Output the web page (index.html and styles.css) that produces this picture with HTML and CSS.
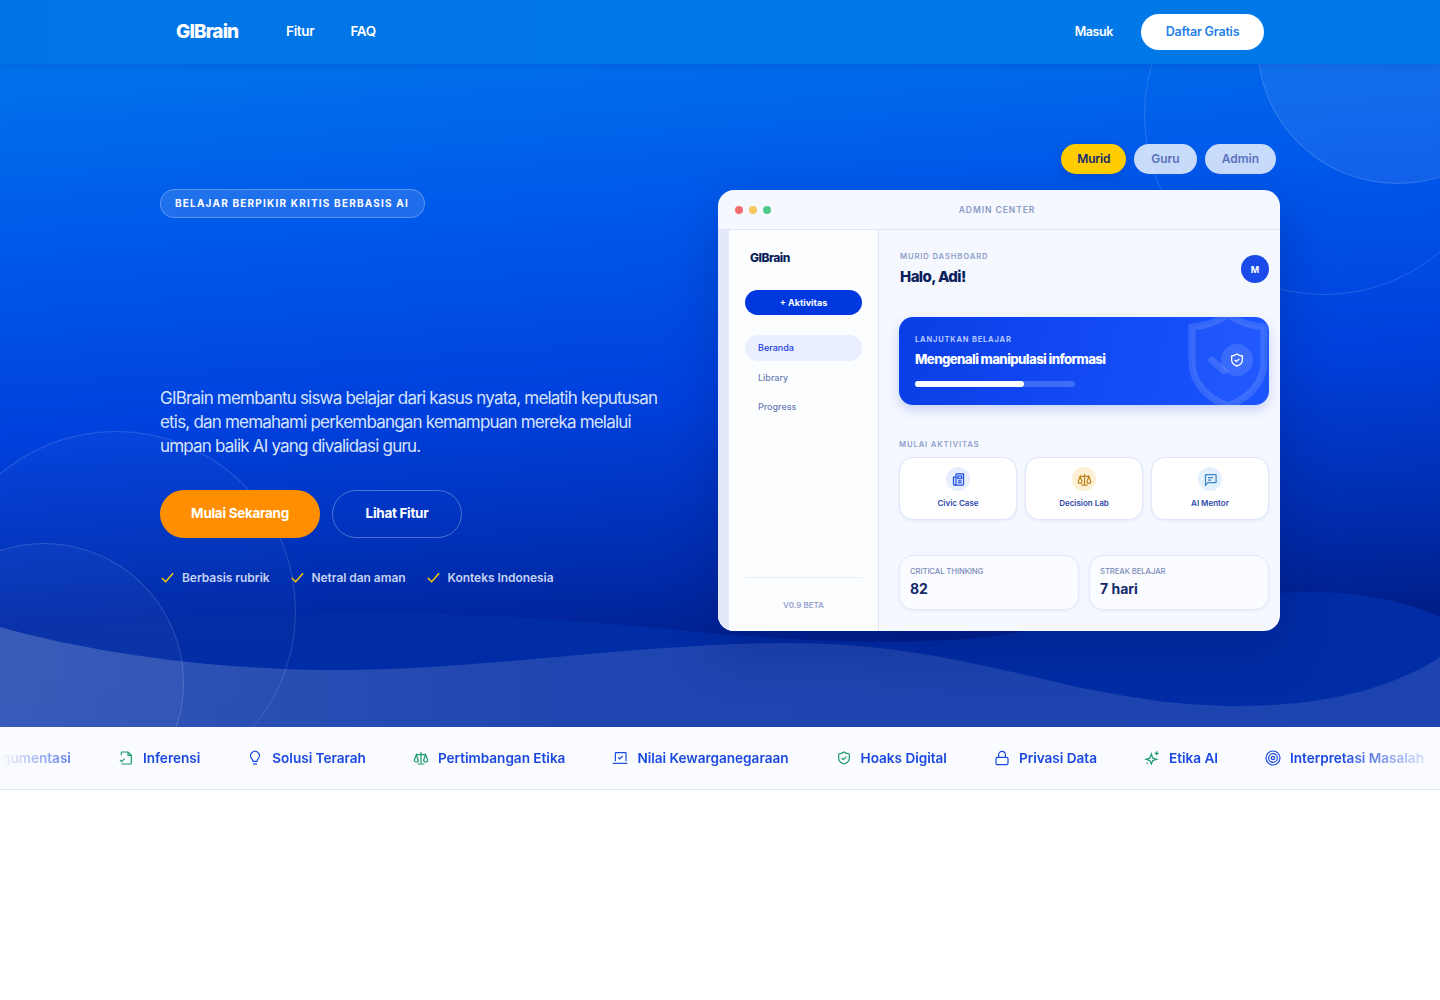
FILE: index.html
```html
<!DOCTYPE html>
<html lang="id">
<head>
    <meta charset="UTF-8">
    <meta name="viewport" content="width=device-width, initial-scale=1.0">
    <title>GIBrain</title>
    <link rel="stylesheet" href="styles.css">
</head>
<body>
    <header class="navbar">
        <div class="navbar-inner">
            <div class="nav-left">
                <a class="logo" href="#">GIBrain</a>
                <a class="nav-link" href="#">Fitur</a>
                <a class="nav-link" href="#">FAQ</a>
            </div>
            <div class="nav-right">
                <a class="nav-link" href="#">Masuk</a>
                <a class="nav-cta" href="#">Daftar Gratis</a>
            </div>
        </div>
    </header>

    <section class="hero">
        <div class="circle circle-top-a"></div>
        <div class="circle circle-top-b"></div>
        <svg class="waves" viewBox="0 580 1440 147" preserveAspectRatio="none" aria-hidden="true">
            <defs>
                <linearGradient id="frontWave" x1="0" x2="1" y1="0" y2="0">
                    <stop offset="0" stop-color="#fff" stop-opacity="0.2"></stop>
                    <stop offset="0.4" stop-color="#fff" stop-opacity="0.12"></stop>
                    <stop offset="1" stop-color="#fff" stop-opacity="0.11"></stop>
                </linearGradient>
            </defs>
            <path fill="#002ca5" d="M0,637 C100,622 220,612 340,612 C480,612 600,622 700,632 C800,642 950,648 1030,630 C1120,610 1220,592 1313,592 C1370,592 1410,604 1440,617 L1440,727 L0,727 Z"></path>
            <path fill="url(#frontWave)" d="M0,627 C100,655 220,670 340,670 C480,670 620,645 780,643 C900,642 980,665 1077,687 C1140,700 1190,706 1238,706 C1320,706 1390,690 1440,657 L1440,727 L0,727 Z"></path>
        </svg>
        <div class="circle circle-left-a"></div>
        <div class="circle circle-left-b"></div>

        <div class="hero-inner">
            <div class="hero-copy">
                <span class="badge">BELAJAR BERPIKIR KRITIS BERBASIS AI</span>
                <div class="hero-title"></div>
                <p class="hero-text">GIBrain membantu siswa belajar dari kasus nyata, melatih keputusan etis, dan memahami perkembangan kemampuan mereka melalui umpan balik AI yang divalidasi guru.</p>
                <div class="hero-actions">
                    <a class="btn-primary" href="#">Mulai Sekarang</a>
                    <a class="btn-outline" href="#">Lihat Fitur</a>
                </div>
                <ul class="checks">
                    <li><svg viewBox="0 0 16 16"><path d="M2 8.500l4 4 8-9"></path></svg>Berbasis rubrik</li>
                    <li><svg viewBox="0 0 16 16"><path d="M2 8.500l4 4 8-9"></path></svg>Netral dan aman</li>
                    <li><svg viewBox="0 0 16 16"><path d="M2 8.500l4 4 8-9"></path></svg>Konteks Indonesia</li>
                </ul>
            </div>

            <div class="hero-preview">
                <div class="role-tabs">
                    <span class="role-tab active">Murid</span>
                    <span class="role-tab">Guru</span>
                    <span class="role-tab">Admin</span>
                </div>
                <div class="app-window">
                    <div class="window-bar">
                        <span class="dot dot-red"></span>
                        <span class="dot dot-yellow"></span>
                        <span class="dot dot-green"></span>
                        <span class="window-title">ADMIN CENTER</span>
                    </div>
                    <div class="window-body">
                        <aside class="sidebar">
                            <div class="sidebar-logo">GIBrain</div>
                            <div class="sidebar-btn">+ Aktivitas</div>
                            <ul class="sidebar-menu">
                                <li class="active">Beranda</li>
                                <li>Library</li>
                                <li>Progress</li>
                            </ul>
                            <div class="sidebar-version">V0.9 BETA</div>
                        </aside>
                        <div class="dash">
                            <div class="dash-head">
                                <div>
                                    <div class="eyebrow">MURID DASHBOARD</div>
                                    <h2>Halo, Adi!</h2>
                                </div>
                                <span class="avatar">M</span>
                            </div>

                            <div class="continue-card">
                                <svg class="continue-shield" viewBox="0 0 84 100">
                                    <path d="M42 4c10 8 22 12 36 13v34c0 22-15 37-36 45C21 88 6 73 6 51V17c14-1 26-5 36-13z"></path>
                                    <path d="M26 50l12 11"></path>
                                </svg>
                                <div class="continue-label">LANJUTKAN BELAJAR</div>
                                <div class="continue-title">Mengenali manipulasi informasi</div>
                                <div class="progress"><div class="progress-fill" style="width: 68%"></div></div>
                                <span class="continue-icon">
                                    <svg viewBox="0 0 24 24"><path d="M12 3c2.500 1.800 5 2.700 8 3v6c0 4.500-3.200 7.500-8 9-4.800-1.500-8-4.500-8-9V6c3-.3 5.500-1.200 8-3z"></path><path d="M8.500 12l2.500 2.500 4.500-4.500"></path></svg>
                                </span>
                            </div>

                            <div class="eyebrow section-label">MULAI AKTIVITAS</div>
                            <div class="activity-grid">
                                <div class="activity">
                                    <span class="activity-icon icon-blue">
                                        <svg viewBox="0 0 24 24"><path d="M8 3h12v16a2 2 0 0 1-2 2H6"></path><path d="M8 3v16a2 2 0 0 1-2 2 2 2 0 0 1-2-2V8h4"></path><rect x="11" y="6.500" width="6" height="4"></rect><path d="M11 14h6M11 17h6"></path></svg>
                                    </span>
                                    Civic Case
                                </div>
                                <div class="activity">
                                    <span class="activity-icon icon-amber">
                                        <svg viewBox="0 0 24 24"><path d="M12 3v17M7 21h10M5 7h14"></path><path d="M2 15l3-8 3 8a3 3 0 0 1-6 0zM16 15l3-8 3 8a3 3 0 0 1-6 0z"></path></svg>
                                    </span>
                                    Decision Lab
                                </div>
                                <div class="activity">
                                    <span class="activity-icon icon-sky">
                                        <svg viewBox="0 0 24 24"><path d="M4 5a1 1 0 0 1 1-1h15a1 1 0 0 1 1 1v11a1 1 0 0 1-1 1H8l-4 4z"></path><path d="M8 9h8M8 13h5"></path></svg>
                                    </span>
                                    AI Mentor
                                </div>
                            </div>

                            <div class="stat-grid">
                                <div class="stat">
                                    <div class="stat-label">CRITICAL THINKING</div>
                                    <div class="stat-value">82</div>
                                </div>
                                <div class="stat">
                                    <div class="stat-label">STREAK BELAJAR</div>
                                    <div class="stat-value">7 hari</div>
                                </div>
                            </div>
                        </div>
                    </div>
                </div>
            </div>
        </div>
    </section>

    <section class="ticker">
        <div class="ticker-track">
            <div class="ticker-item">Argumentasi</div>
            <div class="ticker-item">
                <svg class="green" viewBox="0 0 24 24"><path d="M5 8V4a1 1 0 0 1 1-1h9l5 5v12a1 1 0 0 1-1 1H5"></path><path d="M15 3v5h5"></path><path d="M3 15l2.500 2.500L10 13"></path></svg>
                Inferensi
            </div>
            <div class="ticker-item">
                <svg viewBox="0 0 24 24"><path d="M9 17c0-2-1-3-2.200-4.500A6.500 6.500 0 1 1 17.200 12.500C16 14 15 15 15 17z"></path><path d="M9 21h6"></path></svg>
                Solusi Terarah
            </div>
            <div class="ticker-item">
                <svg class="green" viewBox="0 0 24 24"><path d="M12 3v17M7 21h10M5 7h14"></path><path d="M2 15l3-8 3 8a3 3 0 0 1-6 0zM16 15l3-8 3 8a3 3 0 0 1-6 0z"></path></svg>
                Pertimbangan Etika
            </div>
            <div class="ticker-item">
                <svg viewBox="0 0 24 24"><path d="M5 17V5a1 1 0 0 1 1-1h14a1 1 0 0 1 1 1v12"></path><path d="M1 20h22"></path><path d="M9 11l2.500 2.500L16 9"></path></svg>
                Nilai Kewarganegaraan
            </div>
            <div class="ticker-item">
                <svg class="green" viewBox="0 0 24 24"><path d="M12 3c2.500 1.800 5 2.700 8 3v6c0 4.500-3.200 7.500-8 9-4.800-1.500-8-4.500-8-9V6c3-.3 5.500-1.200 8-3z"></path><path d="M8.500 12l2.500 2.500 4.500-4.500"></path></svg>
                Hoaks Digital
            </div>
            <div class="ticker-item">
                <svg viewBox="0 0 24 24"><rect x="3" y="11" width="18" height="11" rx="2"></rect><path d="M7 11V7a5 5 0 0 1 10 0v4"></path></svg>
                Privasi Data
            </div>
            <div class="ticker-item">
                <svg class="green" viewBox="0 0 24 24"><path d="M11 6l2 6 6 2-6 2-2 5-2-5-6-2 6-2z"></path><path d="M19 2v6M16 5h6M5 19v2M4 20h2"></path></svg>
                Etika AI
            </div>
            <div class="ticker-item">
                <svg viewBox="0 0 24 24"><circle cx="12" cy="12" r="10.500"></circle><circle cx="12" cy="12" r="6.500"></circle><circle cx="12" cy="12" r="2.500"></circle></svg>
                Interpretasi Masalah
            </div>
        </div>
    </section>
</body>
</html>
```

FILE: styles.css
```css
* {
    margin: 0;
    padding: 0;
    box-sizing: border-box;
}

body {
    font-family: 'Inter', 'Liberation Sans', sans-serif;
    background-color: white;
    color: #0b1f5c;
}

a {
    text-decoration: none;
}

ul {
    list-style: none;
}

/* navbar */
.navbar {
    position: relative;
    z-index: 2;
    height: 64px;
    background: linear-gradient(90deg, #0075e6, #0079e8);
    box-shadow: 0 2px 6px rgba(0, 40, 140, 0.18);
}

.navbar-inner {
    width: 1120px;
    height: 100%;
    margin: 0 auto;
    padding: 0 16px;
    display: flex;
    justify-content: space-between;
    align-items: center;
}

.nav-left,
.nav-right {
    display: flex;
    align-items: center;
}

.logo {
    width: 110px;
    margin-bottom: 2px;
    color: white;
    font-size: 19px;
    font-weight: 800;
    letter-spacing: -0.9px;
}

.nav-link {
    margin-right: 36px;
    margin-bottom: 2px;
    color: white;
    font-size: 13.500px;
    font-weight: 600;
    letter-spacing: -0.3px;
}

.nav-right .nav-link {
    margin-right: 28px;
    font-size: 12.500px;
    letter-spacing: -0.4px;
}

.nav-cta {
    width: 123px;
    height: 36px;
    padding-bottom: 1px;
    display: flex;
    align-items: center;
    justify-content: center;
    border-radius: 18px;
    background-color: white;
    color: #1f7fe8;
    font-size: 12.500px;
    font-weight: 600;
    letter-spacing: -0.2px;
}

/* hero */
.hero {
    position: relative;
    height: 663px;
    overflow: hidden;
    background: linear-gradient(176deg, #0072ea 0%, #0058ea 25%, #0040dc 50%, #002cac 72%, #001e8a 84%, #001e8a 100%);
}

.circle {
    position: absolute;
    border-radius: 50%;
    border: 1px solid rgba(255, 255, 255, 0.14);
}

.circle-top-a {
    left: 1144px;
    top: -129px;
    width: 360px;
    height: 360px;
}

.circle-top-b {
    left: 1257px;
    top: -160px;
    width: 280px;
    height: 280px;
    background-color: rgba(255, 255, 255, 0.07);
}

.circle-left-a {
    left: -64px;
    top: 367px;
    width: 360px;
    height: 360px;
    border-bottom: none;
    background: linear-gradient(180deg, rgba(255, 255, 255, 0.025), rgba(255, 255, 255, 0));
}

.circle-left-b {
    left: -96px;
    top: 479px;
    width: 280px;
    height: 280px;
    background: rgba(255, 255, 255, 0.03);
}

.waves {
    position: absolute;
    left: 0;
    bottom: 0;
    width: 100%;
    height: 147px;
    display: block;
}

.hero-inner {
    position: relative;
    width: 1120px;
    height: 100%;
    margin: 0 auto;
    display: flex;
    justify-content: space-between;
}

.hero-copy {
    width: 510px;
    padding-top: 125px;
}

.badge {
    display: inline-block;
    height: 29px;
    line-height: 27px;
    padding: 0 15px 0 14px;
    border: 1px solid rgba(255, 255, 255, 0.25);
    border-radius: 15px;
    background-color: rgba(255, 255, 255, 0.12);
    color: white;
    font-size: 10px;
    font-weight: 700;
    letter-spacing: 1.2px;
}

.hero-title {
    height: 168px;
}

.hero-text {
    color: #d6e3fb;
    font-size: 17px;
    line-height: 24px;
    letter-spacing: -0.8px;
}

.hero-actions {
    display: flex;
    gap: 12px;
    margin-top: 32px;
}

.btn-primary,
.btn-outline {
    height: 48px;
    padding-bottom: 2px;
    display: flex;
    align-items: center;
    justify-content: center;
    border-radius: 24px;
    color: white;
    font-size: 13.500px;
    font-weight: 700;
    letter-spacing: -0.3px;
}

.btn-primary {
    width: 160px;
    background-color: #ff8f00;
}

.btn-outline {
    width: 130px;
    border: 1px solid rgba(255, 255, 255, 0.3);
}

.checks {
    display: flex;
    gap: 20px;
    margin-top: 32px;
}

.checks li {
    display: flex;
    align-items: center;
    gap: 7px;
    color: #c5d2f2;
    font-size: 12px;
    font-weight: 600;
    letter-spacing: -0.05px;
}

.checks svg {
    width: 15px;
    height: 15px;
    fill: none;
    stroke: #ffd000;
    stroke-width: 1.500;
}

/* dashboard preview */
.hero-preview {
    width: 562px;
    padding-top: 80px;
}

.role-tabs {
    display: flex;
    justify-content: flex-end;
    gap: 8px;
    margin-right: 4px;
    margin-bottom: 16px;
}

.role-tab {
    height: 30px;
    line-height: 30px;
    padding: 0 17px;
    border-radius: 15px;
    background-color: rgba(255, 255, 255, 0.78);
    color: #5a72bb;
    font-size: 12px;
    font-weight: 600;
}

.role-tab.active {
    padding: 0 16px;
    background-color: #ffcc00;
    color: #152a6e;
    letter-spacing: -0.2px;
    box-shadow: 0 2px 8px rgba(0, 20, 100, 0.2);
}

.app-window {
    height: 441px;
    border-radius: 16px;
    overflow: hidden;
    background-color: #f5f8ff;
    box-shadow: 0 20px 50px rgba(0, 20, 100, 0.28);
}

.window-bar {
    position: relative;
    height: 40px;
    padding-left: 17px;
    display: flex;
    align-items: center;
    gap: 6px;
    border-bottom: 1px solid #dfe7fa;
}

.dot {
    width: 8px;
    height: 8px;
    border-radius: 50%;
}

.dot-red { background-color: #f16d6d; }
.dot-yellow { background-color: #f6c85c; }
.dot-green { background-color: #4fc98c; }

.window-title {
    position: absolute;
    left: 0;
    right: 0;
    text-align: center;
    padding-right: 4px;
    color: #8a9ac4;
    font-size: 8.500px;
    font-weight: 600;
    letter-spacing: 0.95px;
}

.window-body {
    display: flex;
    height: 401px;
}

.sidebar {
    width: 161px;
    padding: 20px 16px 0 16px;
    display: flex;
    flex-direction: column;
    border-left: 11px solid #e4e9f9;
    border-right: 1px solid #dfe7fa;
    background-color: #fcfdff;
}

.sidebar-logo {
    padding-left: 5px;
    height: 16px;
    color: #0b1f5c;
    font-size: 12px;
    font-weight: 800;
    letter-spacing: -0.5px;
}

.sidebar-btn {
    height: 25px;
    line-height: 26px;
    margin-top: 24px;
    border-radius: 13px;
    background-color: #0038e0;
    color: white;
    text-align: center;
    font-size: 9px;
    font-weight: 700;
}

.sidebar-menu {
    margin-top: 20px;
}

.sidebar-menu li {
    height: 26px;
    line-height: 26px;
    padding-left: 13px;
    margin-bottom: 3px;
    border-radius: 13px;
    color: #6c7db5;
    font-size: 9px;
    font-weight: 500;
}

.sidebar-menu li.active {
    background-color: #e9effd;
    color: #1a3ee0;
    margin-bottom: 4px;
}

.sidebar-version {
    margin-top: auto;
    height: 54px;
    line-height: 54px;
    border-top: 1px solid #e8ecf8;
    color: #95a3cb;
    text-align: center;
    font-size: 8px;
    font-weight: 600;
}

.dash {
    flex: 1;
    padding: 22px 11px 0 20px;
}

.dash-head {
    height: 65px;
    padding-left: 1px;
    display: flex;
    justify-content: space-between;
    align-items: flex-start;
}

.eyebrow {
    color: #8f9fca;
    font-size: 7.700px;
    font-weight: 600;
    letter-spacing: 0.85px;
}

.dash h2 {
    margin-top: 6px;
    font-size: 15px;
    font-weight: 800;
    letter-spacing: -0.6px;
}

.avatar {
    width: 28px;
    height: 28px;
    margin-top: 3px;
    border-radius: 50%;
    display: flex;
    align-items: center;
    justify-content: center;
    background-color: #1a4be8;
    color: white;
    font-size: 9px;
    font-weight: 700;
}

.continue-card {
    position: relative;
    height: 88px;
    padding: 18px 16px 0;
    border-radius: 14px;
    overflow: hidden;
    background: linear-gradient(100deg, #0a3ee6, #1a55ff);
    box-shadow: 0 5px 12px rgba(20, 60, 200, 0.2);
}

.continue-shield {
    position: absolute;
    left: 286px;
    top: -7px;
    width: 86px;
    height: 100px;
    fill: rgba(255, 255, 255, 0.03);
    stroke: rgba(255, 255, 255, 0.13);
    stroke-width: 7;
    stroke-linecap: round;
}

.continue-label {
    position: relative;
    color: #b3c6ff;
    font-size: 7.500px;
    font-weight: 700;
    letter-spacing: 0.8px;
}

.continue-title {
    position: relative;
    margin-top: 7px;
    color: white;
    font-size: 13.200px;
    font-weight: 800;
    letter-spacing: -0.6px;
}

.progress {
    position: relative;
    width: 160px;
    height: 6px;
    margin-top: 14px;
    border-radius: 3px;
    background-color: rgba(255, 255, 255, 0.2);
}

.progress-fill {
    height: 100%;
    border-radius: 3px;
    background-color: white;
}

.continue-icon {
    position: absolute;
    left: 322px;
    top: 27px;
    width: 32px;
    height: 32px;
    border-radius: 50%;
    display: flex;
    align-items: center;
    justify-content: center;
    background-color: rgba(255, 255, 255, 0.12);
}

.continue-icon svg {
    width: 16px;
    height: 16px;
    fill: none;
    stroke: white;
    stroke-width: 2;
}

.section-label {
    margin-top: 35px;
}

.activity-grid {
    display: grid;
    grid-template-columns: repeat(3, 1fr);
    gap: 8px;
    margin-top: 8px;
}

.activity {
    height: 63px;
    padding-top: 9px;
    display: flex;
    flex-direction: column;
    align-items: center;
    gap: 7px;
    border: 1px solid #e0e7fb;
    border-radius: 14px;
    background-color: white;
    box-shadow: 0 1px 3px rgba(40, 70, 170, 0.08);
    color: #2f48a8;
    font-size: 8px;
    font-weight: 600;
}

.activity-icon {
    width: 24px;
    height: 24px;
    border-radius: 50%;
    display: flex;
    align-items: center;
    justify-content: center;
}

.activity-icon svg {
    width: 15px;
    height: 15px;
    fill: none;
    stroke-width: 2;
}

.icon-blue { background-color: #e8eefe; }
.icon-blue svg { stroke: #1f4fe6; }
.icon-amber { background-color: #fdf0d5; }
.icon-amber svg { stroke: #c0841c; }
.icon-sky { background-color: #e3f1fe; }
.icon-sky svg { stroke: #3f86c4; }

.stat-grid {
    display: grid;
    grid-template-columns: repeat(2, 1fr);
    gap: 10px;
    margin-top: 35px;
}

.stat {
    height: 55px;
    padding: 10px 10px 0;
    border: 1px solid #e2e8fb;
    border-radius: 14px;
    background-color: #fbfcff;
    box-shadow: 0 1px 3px rgba(40, 70, 170, 0.07);
}

.stat-label {
    color: #7d8cbb;
    font-size: 7.800px;
    font-weight: 500;
    letter-spacing: -0.15px;
}

.stat-value {
    margin-top: 4px;
    color: #14296b;
    font-size: 14px;
    font-weight: 700;
}

/* ticker */
.ticker {
    height: 63px;
    overflow: hidden;
    display: flex;
    align-items: center;
    background-color: #fafbff;
    border-bottom: 1px solid #dfe4f5;
}

.ticker-track {
    flex: none;
    width: 100%;
    display: flex;
    align-items: center;
    gap: 47px;
    white-space: nowrap;
    -webkit-mask-image: linear-gradient(90deg, transparent, black 100px, black 1340px, transparent 1440px);
    mask-image: linear-gradient(90deg, transparent, black 100px, black 1340px, transparent 1440px);
}

.ticker-item {
    flex: none;
    display: flex;
    align-items: center;
    gap: 9px;
    color: #1a48e0;
    font-size: 13.600px;
    font-weight: 600;
    letter-spacing: -0.02px;
}

.ticker-item:first-child {
    margin-left: -13px;
}

.ticker-item svg {
    width: 16px;
    height: 16px;
    fill: none;
    stroke: #1a48e0;
    stroke-width: 1.800;
}

.ticker-item svg.green {
    stroke: #1b9a6c;
}
```
